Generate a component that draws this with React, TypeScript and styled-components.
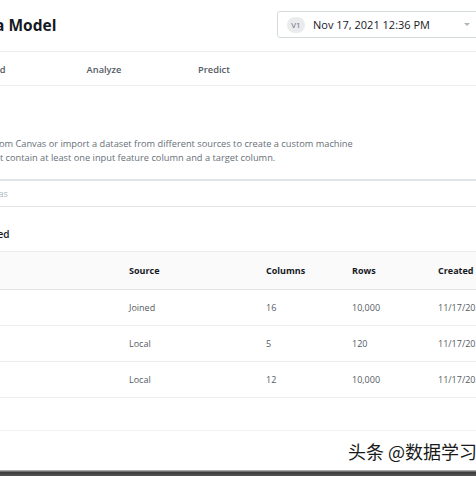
import React from "react";
import styled, { createGlobalStyle } from "styled-components";

interface IDataset {
  name: string;
  source: string;
  columns: number;
  rows: string;
  created: string;
}

const datasets: IDataset[] = [
  { name: "churn", source: "Joined", columns: 16, rows: "10,000", created: "11/17/2021" },
  { name: "calls", source: "Local", columns: 5, rows: "120", created: "11/17/2021" },
  { name: "users", source: "Local", columns: 12, rows: "10,000", created: "11/17/2021" },
];

const tabs = ["Select", "Build", "Analyze", "Predict"];

const GlobalStyle = createGlobalStyle`
  html, body {
    margin: 0;
    padding: 0;
    background: #fff;
  }
  body {
    font-family: "Open Sans", "Liberation Sans", sans-serif;
  }
`;

const Root = styled.div`
  width: 476px;
  height: 477px;
  overflow: hidden;
  display: flex;
  flex-direction: column;
  background: #fff;
`;

// the screenshot is a crop: the page runs off both sides
const Page = styled.div`
  margin-left: -180px;
  width: 681px;
  flex: none;
  display: flex;
  flex-direction: column;
`;

const Header = styled.div`
  display: flex;
  align-items: center;
  height: 52px;
  padding: 0 20px 2px 96px;
  box-sizing: border-box;
  border-bottom: 1px solid #eaeded;
`;

const Title = styled.h1`
  margin: 0;
  font-size: 15.5px;
  font-weight: 700;
  color: #16191f;
  white-space: nowrap;
`;

const VersionSelect = styled.div`
  margin-left: auto;
  width: 204px;
  height: 27px;
  box-sizing: border-box;
  border: 1px solid #d5dbdb;
  border-radius: 3px;
  display: flex;
  align-items: center;
  padding: 0 10px 0 9px;
`;

const Badge = styled.span`
  width: 18px;
  height: 16px;
  border-radius: 8px;
  background: #e9ebed;
  color: #687078;
  font-size: 8px;
  display: flex;
  align-items: center;
  justify-content: center;
`;

const DateText = styled.span`
  margin-left: 8px;
  font-size: 11px;
  color: #16191f;
  white-space: nowrap;
`;

const Caret = styled.span`
  margin-left: auto;
  width: 0;
  height: 0;
  border-left: 3px solid transparent;
  border-right: 3px solid transparent;
  border-top: 3px solid #aab7b8;
`;

const TabBar = styled.div`
  display: flex;
  padding-left: 9px;
  height: 34px;
  box-sizing: border-box;
  border-bottom: 1px solid #eaeded;
`;

const Tab = styled.div`
  width: 110px;
  text-align: center;
  padding-top: 2px;
  line-height: 31px;
  font-size: 9.3px;
  font-weight: 600;
  color: #545b64;
`;

const Body = styled.div`
  padding: 51px 20px 0 102px;
`;

const Description = styled.p`
  margin: 0;
  font-size: 9.25px;
  line-height: 14px;
  color: #687078;
  white-space: nowrap;
`;

const SearchBox = styled.div`
  margin-top: 14px;
  height: 28px;
  box-sizing: border-box;
  border-top: 2px solid #e1e4e6;
  border-bottom: 1px solid #e1e4e6;
  border-left: 1px solid #e1e4e6;
  display: flex;
  align-items: center;
  padding-left: 24px;
  font-size: 9px;
  color: #aab7b8;
`;

const SelectedLabel = styled.div`
  margin-top: 20px;
  line-height: 14px;
  font-size: 10px;
  font-weight: 600;
  color: #16191f;
  white-space: nowrap;
`;

const Table = styled.div`
  margin-top: 10px;
  border-top: 1px solid #eaeded;
`;

const Row = styled.div<{ $head?: boolean }>`
  display: grid;
  grid-template-columns: 207px 137px 86px 86px 1fr;
  align-items: center;
  height: ${(p) => (p.$head ? "38px" : "36px")};
  box-sizing: border-box;
  border-bottom: 1px solid ${(p) => (p.$head ? "#dfe3e5" : "#eaeded")};
  background: ${(p) => (p.$head ? "#fafafa" : "#fff")};
  font-size: 9px;
  font-weight: ${(p) => (p.$head ? 700 : 400)};
  color: ${(p) => (p.$head ? "#16191f" : "#545b64")};
  white-space: nowrap;
`;

const TableFoot = styled.div`
  height: 33px;
  box-sizing: border-box;
  border-bottom: 1px solid #f0f1f1;
`;

const Watermark = styled.div`
  height: 39px;
  display: flex;
  align-items: center;
  padding-left: 348px;
  font-family: "Noto Sans CJK SC", sans-serif;
  font-size: 18px;
  color: #1a1a1a;
  white-space: nowrap;
  text-shadow: 0 0 1px #fff;
`;

const BottomEdge = styled.div`
  height: 6px;
  background: linear-gradient(#c8c8c8, #3c3c3c 40%, #555);
`;

const App: React.FC = () => {
  return (
    <Root>
      <GlobalStyle />
      <Page>
        <Header>
          <Title>Churn Data Model</Title>
          <VersionSelect>
            <Badge>V1</Badge>
            <DateText>Nov 17, 2021 12:36 PM</DateText>
            <Caret />
          </VersionSelect>
        </Header>
        <TabBar>
          {tabs.map((t) => (
            <Tab key={t}>{t}</Tab>
          ))}
        </TabBar>
        <Body>
          <Description>
            Select a dataset from Canvas or import a dataset from different sources to create a custom machine
            <br />
            models. Data must contain at least one input feature column and a target column.
          </Description>
          <SearchBox>Search Canvas</SearchBox>
          <SelectedLabel>1 dataset selected</SelectedLabel>
          <Table>
            <Row $head>
              <span>Name</span>
              <span>Source</span>
              <span>Columns</span>
              <span>Rows</span>
              <span>Created</span>
            </Row>
            {datasets.map((d) => (
              <Row key={d.name}>
                <span>{d.name}</span>
                <span>{d.source}</span>
                <span>{d.columns}</span>
                <span>{d.rows}</span>
                <span>{d.created}</span>
              </Row>
            ))}
            <TableFoot />
          </Table>
        </Body>
      </Page>
      <Watermark>头条 @数据学习</Watermark>
      <BottomEdge />
    </Root>
  );
};

export default App;
